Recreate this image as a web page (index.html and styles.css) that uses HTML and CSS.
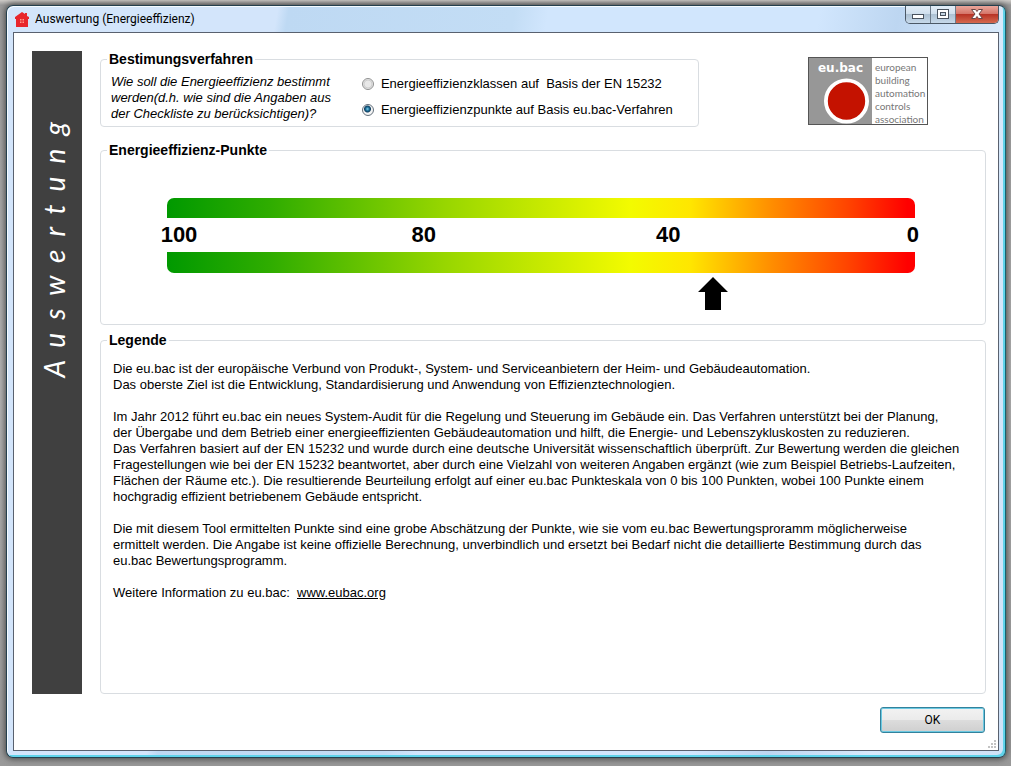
FILE: index.html
```html
<!DOCTYPE html>
<html lang="de">
<head>
<meta charset="utf-8">
<title>Auswertung (Energieeffizienz)</title>
<link rel="stylesheet" href="styles.css">
</head>
<body>
<div class="window">
  <header class="titlebar">
    <svg class="app-icon" viewBox="0 0 14 15" aria-hidden="true">
      <path d="M7 0 0 5v2h1v8h12V7h1V5l-2-1V1h-2v1z" fill="#e8262c"/>
      <path d="M5 7h1.500v1.500H5zM7.500 7H9v1.500H7.500zM5 9.500h1.500V11H5zM7.500 9.500H9V11H7.500z" fill="#ff9a8c"/>
    </svg>
    <h1 class="title">Auswertung (Energieeffizienz)</h1>
    <div class="caption-buttons">
      <button class="caption-button" type="button" aria-label="Minimieren">
        <svg viewBox="0 0 24 17"><rect x="6.500" y="8.500" width="11" height="4" fill="#fff" stroke="#49525e"/></svg>
      </button>
      <button class="caption-button" type="button" aria-label="Maximieren">
        <svg viewBox="0 0 24 17"><rect x="6.500" y="3.500" width="11" height="9" fill="#fff" stroke="#49525e"/><rect x="9.500" y="6.500" width="5" height="3" fill="#c4d4e2" stroke="#49525e"/></svg>
      </button>
      <button class="caption-button close" type="button" aria-label="Schließen">
        <svg viewBox="0 0 42 17"><path d="M15.500 3.500h4l1.500 2 1.500-2h4l-3.500 4.500 3.500 4.500h-4L21 10.500 19.500 12.500h-4L19 8z" fill="#fff" stroke="#6b4646"/></svg>
      </button>
    </div>
  </header>

  <main class="client">
    <div class="columns">
      <aside class="banner"><span class="banner-text">A  u  s  w  e  r  t  u  n  g</span></aside>

      <div class="groups">
        <div class="top-row">
          <fieldset class="group method">
            <legend>Bestimungsverfahren</legend>
            <div class="method-body">
              <p class="question">Wie soll die Energieeffizienz bestimmt<br>werden(d.h. wie sind die Angaben aus<br>der Checkliste zu berücksichtigen)?</p>
              <div class="options">
                <label class="option"><input type="radio" name="method">Energieeffizienzklassen auf&nbsp; Basis der EN 15232</label>
                <label class="option"><input type="radio" name="method" checked>Energieeffizienzpunkte auf Basis eu.bac-Verfahren</label>
              </div>
            </div>
          </fieldset>
          <div class="logo">
            <div class="logo-mark"><span>eu.bac</span><svg viewBox="0 0 48 48" aria-hidden="true"><circle cx="24" cy="24" r="21.500" fill="#c41200" stroke="#fff" stroke-width="4"/></svg></div>
            <p class="logo-name">european<br>building<br>automation<br>controls<br>association</p>
          </div>
        </div>

        <fieldset class="group points">
          <legend>Energieeffizienz-Punkte</legend>
          <div class="scale">
            <div class="bar bar-top"></div>
            <div class="ticks"><span>100</span><span>80</span><span>40</span><span>0</span></div>
            <div class="bar bar-bottom"></div>
            <div class="pointer-track">
              <svg class="pointer" style="margin-left:71%" viewBox="0 0 30 33" role="img" aria-label="Ergebnis"><path d="M15 0 30 15h-7v18H7V15H0z"/></svg>
            </div>
          </div>
        </fieldset>

        <fieldset class="group info">
          <legend>Legende</legend>
          <div class="text">
            <p>Die eu.bac ist der europäische Verbund von Produkt-, System- und Serviceanbietern der Heim- und Gebäudeautomation.<br>Das oberste Ziel ist die Entwicklung, Standardisierung und Anwendung von Effizienztechnologien.</p>
            <p>Im Jahr 2012 führt eu.bac ein neues System-Audit für die Regelung und Steuerung im Gebäude ein. Das Verfahren unterstützt bei der Planung,<br>der Übergabe und dem Betrieb einer energieeffizienten Gebäudeautomation und hilft, die Energie- und Lebenszykluskosten zu reduzieren.<br>Das Verfahren basiert auf der EN 15232 und wurde durch eine deutsche Universität wissenschaftlich überprüft. Zur Bewertung werden die gleichen<br>Fragestellungen wie bei der EN 15232 beantwortet, aber durch eine Vielzahl von weiteren Angaben ergänzt (wie zum Beispiel Betriebs-Laufzeiten,<br>Flächen der Räume etc.). Die resultierende Beurteilung erfolgt auf einer eu.bac Punkteskala von 0 bis 100 Punkten, wobei 100 Punkte einem<br>hochgradig effizient betriebenem Gebäude entspricht.</p>
            <p>Die mit diesem Tool ermittelten Punkte sind eine grobe Abschätzung der Punkte, wie sie vom eu.bac Bewertungsproramm möglicherweise<br>ermittelt werden. Die Angabe ist keine offizielle Berechnung, unverbindlich und ersetzt bei Bedarf nicht die detaillierte Bestimmung durch das<br>eu.bac Bewertungsprogramm.</p>
            <p>Weitere Information zu eu.bac:&nbsp; <a href="http://www.eubac.org">www.eubac.org</a></p>
          </div>
        </fieldset>
      </div>
    </div>
    <footer class="footer"><button class="ok" type="button">OK</button></footer>
    <svg class="grip" viewBox="0 0 9 9" aria-hidden="true"><path d="M7 0h2v2H7zM4 3h2v2H4zM7 3h2v2H7zM1 6h2v2H1zM4 6h2v2H4zM7 6h2v2H7z" fill="#c3c3c3"/></svg>
  </main>
</div>
</body>
</html>
```
FILE: styles.css
```css
* { box-sizing: border-box; }

body {
  margin: 0;
  min-height: 100vh;
  padding: 5px 5px 8px 6px;
  display: flex;
  background: linear-gradient(#cfccc8, #9b9b9b 5px, #b4b4b4 50%, #999);
  color: #000;
  font: 13px/16px "Liberation Sans", Arial, sans-serif;
}

p { margin: 0; }

.window {
  flex: 1;
  display: flex;
  flex-direction: column;
  padding: 0 6px 6px;
  border: 1px solid #24404f;
  border-right-color: #15626f;
  border-radius: 7px;
  background: linear-gradient(100deg, #d3e5fb 0, #d3e5fb 24%, #bed9f3 25%, #c3ddf5 45%, #d1e6fd 48%, #d1e6fd 72%, #bdd6f1 79%, #d8e9fb 88%, #cfe2f8);
  box-shadow: inset 1px 1px 0 #f5fbff, inset -2px -2px 0 #5fd3ea, 0 0 6px 1px #444;
}

.titlebar {
  height: 26px;
  display: flex;
  align-items: center;
  gap: 6px;
  padding-left: 2px;
}

.app-icon { width: 14px; height: 15px; }

.title {
  flex: 1;
  margin: 0;
  font: 12px/16px Roboto, "Noto Sans", sans-serif;
}

.caption-buttons {
  align-self: flex-start;
  display: flex;
  border: 1px solid #4b5866;
  border-top: 0;
  border-radius: 0 0 5px 5px;
  overflow: hidden;
}

.caption-button {
  width: 25px;
  height: 17px;
  padding: 0;
  border: 0;
  border-right: 1px solid #6d7b8a;
  background: linear-gradient(#e2edf7, #d0dfed 45%, #adc1d3 50%, #c6d9ea);
}

.caption-button svg { display: block; width: 100%; height: 100%; }

.caption-button.close {
  width: 42px;
  border-right: 0;
  background: linear-gradient(#eaa79c, #d5766a 45%, #b83426 50%, #d5694f);
}

.client {
  position: relative;
  flex: 1;
  display: flex;
  flex-direction: column;
  padding: 18px 12px 17px 18px;
  border: 1px solid #59616f;
  background: #fff;
}

.columns { flex: 1; display: flex; gap: 18px; }

.banner {
  width: 50px;
  padding: 71px 6px 0 0;
  display: flex;
  justify-content: center;
  background: #404040;
  color: #fff;
}

.banner-text {
  writing-mode: vertical-rl;
  transform: rotate(180deg);
  align-self: flex-start;
  white-space: pre;
  font: italic 28px/44px Lato, sans-serif;
}

.groups { flex: 1; display: flex; flex-direction: column; }

.top-row { display: flex; justify-content: space-between; }

.group {
  min-width: 0;
  margin: 0;
  padding: 0;
  border: 1px solid #d9dde1;
  border-radius: 4px;
}

.group legend {
  margin-left: 6px;
  padding: 0 2px;
  font-size: 14px;
  font-weight: bold;
}

.method { flex: 0 1 599px; height: 76px; }

.method-body { display: flex; gap: 31px; padding: 7px 10px 0; }

.question { font-style: italic; white-space: nowrap; }

.options { display: flex; flex-direction: column; gap: 10px; padding-top: 2px; }

.option { display: flex; align-items: center; white-space: nowrap; }

.option input {
  appearance: none;
  width: 12px;
  height: 12px;
  margin: 0 7px 0 0;
  border: 1px solid #8e8f8f;
  border-radius: 50%;
  background: radial-gradient(circle, #e8e8e8 0 3px, #c9c9c9 4px, #f4f4f4 5px);
}

.option input:checked {
  border-color: #64707c;
  background: radial-gradient(circle at 45% 40%, #7fd0ee 0, #17668f 2px, #123f60 3px, #f4f4f4 4px);
}

.logo {
  width: 120px;
  height: 68px;
  margin: 6px 58px 0 0;
  display: flex;
  border: 1px solid #555;
  background: #fff;
}

.logo-mark {
  width: 63px;
  display: flex;
  flex-direction: column;
  align-items: center;
  background: #979797;
  color: #fff;
  font: bold 12px/20px "DejaVu Sans", sans-serif;
}

.logo-mark svg { width: 47px; height: 47px; margin-left: 12px; }

.logo-name {
  padding: 3px 0 0 3px;
  color: #777;
  font: 10px/13px Lato, sans-serif;
}

.points { height: 183px; margin-top: 15px; }

.scale { padding: 40px 70px 0 66px; }

.bar {
  height: 20px;
  background: linear-gradient(90deg, #009900, #30ad00 14%, #97d600 37%, #f3fb00 62%, #ffe600 70%, #ff8c00 81%, #ff4400 91%, #f00 99%);
}

.bar-top { border-radius: 7px 7px 0 0; }

.bar-bottom { height: 21px; border-radius: 0 0 7px 7px; }

.ticks {
  display: flex;
  justify-content: space-between;
  margin: 0 -17px 0 -7px;
  font: bold 22px/34px "Liberation Sans", Arial, sans-serif;
}

.ticks span { width: 38px; text-align: center; }

.pointer-track { padding-top: 4px; }

.pointer { display: block; width: 30px; height: 33px; }

.info { flex: 1; margin-top: 7px; }

.text {
  display: flex;
  flex-direction: column;
  gap: 16px;
  padding: 13px 0 0 12px;
  white-space: nowrap;
}

.text a { color: #000; }

.footer { display: flex; justify-content: flex-end; padding: 13px 1px 0 0; }

.ok {
  width: 105px;
  height: 26px;
  border: 1px solid #33829c;
  border-radius: 3px;
  background: linear-gradient(#f2f2f2, #ebebeb 48%, #dcdcdc 52%, #cfcfcf);
  box-shadow: inset 0 0 0 1px #6cc9e2;
  color: #000;
  font: 12px/16px Roboto, "Noto Sans", sans-serif;
}

.grip { position: absolute; right: 2px; bottom: 1px; width: 9px; height: 9px; }
```
